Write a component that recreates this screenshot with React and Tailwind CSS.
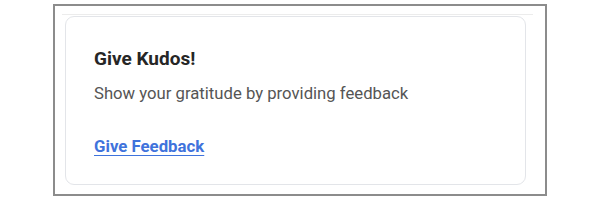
export default function App() {
  return (
    <div className="w-[600px] h-[200px] bg-white pt-[4px] pl-[53px]" style={{ fontFamily: "Roboto, 'Liberation Sans', sans-serif" }}>
      <div className="w-[494px] h-[192px] border-2 border-[#8c8c8c] px-[7px] pt-[8px]">
        <div className="h-px w-[471px] bg-[#ececec]" />
        <div className="ml-[3px] mt-px w-[461px] h-[169px] rounded-[9px] border border-[#e3e5e9] pl-[28px] pt-[31px]">
          <div className="text-[19px] leading-[22px] font-bold text-[#262626]">Give Kudos!</div>
          <div className="mt-[14px] text-[16.7px] leading-[20px] text-[#555555]">Show your gratitude by providing feedback</div>
          <a href="#" className="inline-block mt-[32px] text-[16.8px] leading-[20px] font-bold text-[#3f73dc] underline underline-offset-[3px]">Give Feedback</a>
        </div>
      </div>
    </div>
  );
}
